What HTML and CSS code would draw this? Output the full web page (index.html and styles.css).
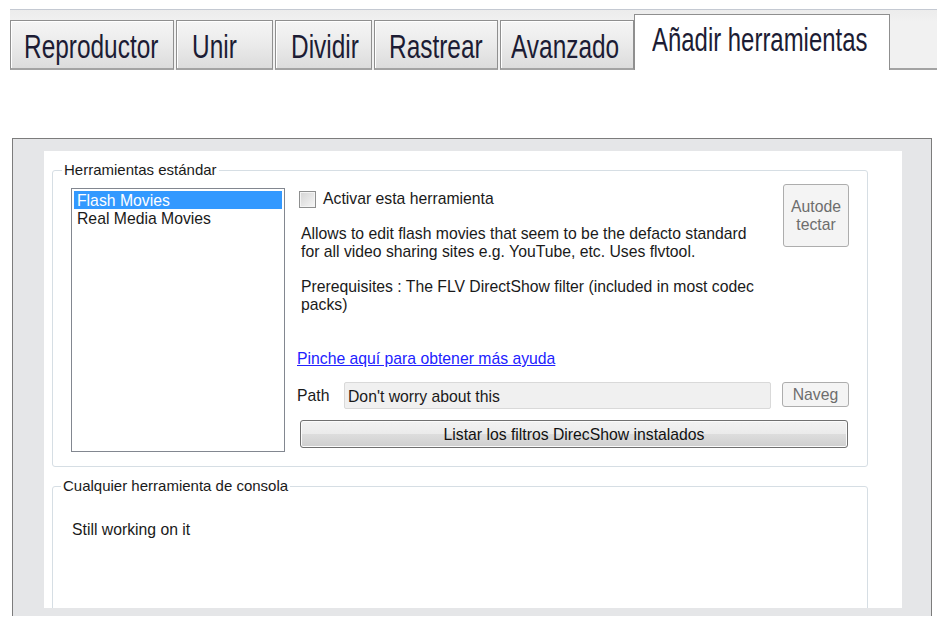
FILE: index.html
```html
<!DOCTYPE html>
<html lang="es">
<head>
<meta charset="utf-8">
<title>Añadir herramientas</title>
<link rel="stylesheet" href="styles.css">
</head>
<body>
  <nav class="tabstrip">
    <div class="tab tab-w1"><span class="tab-label">Reproductor</span></div>
    <div class="tab tab-w2"><span class="tab-label">Unir</span></div>
    <div class="tab tab-w2"><span class="tab-label">Dividir</span></div>
    <div class="tab tab-w4"><span class="tab-label">Rastrear</span></div>
    <div class="tab tab-w5"><span class="tab-label">Avanzado</span></div>
    <div class="tab tab-active"><span class="tab-label">Añadir herramientas</span></div>
    <div class="tab-filler"></div>
  </nav>

  <section class="panel">
    <div class="page">
      <fieldset class="group group-tools">
        <legend class="group-title">Herramientas estándar</legend>
        <div class="tool-row">
          <ul class="listbox">
            <li class="list-item selected">Flash Movies</li>
            <li class="list-item">Real Media Movies</li>
          </ul>

          <div class="tool-detail">
            <div class="detail-top">
              <div class="detail-text">
                <label class="check-row">
                  <span class="checkbox"></span>
                  <span>Activar esta herramienta</span>
                </label>
                <p class="desc">Allows to edit flash movies that seem to be the defacto standard for all video sharing sites e.g. YouTube, etc. Uses flvtool.</p>
                <p class="desc desc-req">Prerequisites : The FLV DirectShow filter (included in most codec packs)</p>
              </div>
              <button class="btn btn-disabled btn-auto">Autode<br>tectar</button>
            </div>

            <a class="help-link" href="#">Pinche aquí para obtener más ayuda</a>

            <div class="path-row">
              <span class="path-label">Path</span>
              <div class="textbox">Don't worry about this</div>
              <button class="btn btn-disabled btn-browse">Naveg</button>
            </div>

            <button class="btn btn-list">Listar los filtros DirecShow instalados</button>
          </div>
        </div>
      </fieldset>

      <fieldset class="group group-console">
        <legend class="group-title">Cualquier herramienta de consola</legend>
        <p class="console-text">Still working on it</p>
      </fieldset>
    </div>
  </section>
</body>
</html>
```

FILE: styles.css
```css
* {
  box-sizing: border-box;
}

html, body {
  margin: 0;
  padding: 0;
  background: #ffffff;
  overflow: hidden;
}

body {
  width: 937px;
  height: 617px;
  font-family: "Liberation Sans", Arial, sans-serif;
  font-size: 15.75px;
  line-height: 18px;
  color: #1a1a1a;
}

/* ---------- tab strip ---------- */
.tabstrip {
  display: flex;
  align-items: flex-end;
  margin: 9px 0 0 10px;
  height: 61px;
  border-top: 1px solid #c4c9d2;
  background: linear-gradient(#ececec, #f1f1f1 12px, #f1f1f1);
}

.tab {
  height: 50px;
  margin-right: 2px;
  padding: 9px 0 0 14px;
  border: 1px solid #8f8f8f;
  border-bottom: 2px solid #a3a3a3;
  background: linear-gradient(#f5f5f5, #ececec 45%, #dcdcdc);
  box-shadow: inset 1px 1px 0 #ffffff;
  overflow: hidden;
  white-space: nowrap;
}

.tab-label {
  display: inline-block;
  font-size: 33px;
  line-height: 33px;
  color: #1c1c34;
  transform: scaleX(0.74);
  transform-origin: left center;
}

.tab-w1 { width: 164px; padding-left: 13px; }
.tab-w2 { width: 97px; padding-left: 15px; }
.tab-w4 { width: 124px; }
.tab-w5 { width: 134px; margin-right: 0; padding-left: 10px; }

.tab-active {
  width: 256px;
  height: 56px;
  margin-right: 0;
  padding: 8px 0 0 17px;
  border-bottom: none;
  background: #ffffff;
  box-shadow: none;
}

.tab-active .tab-label {
  transform: scaleX(0.725);
}

.tab-filler {
  flex: 1;
  align-self: stretch;
  border-bottom: 2px solid #a3a3a3;
}

/* ---------- panel ---------- */
.panel {
  margin: 68px 5px 0 12px;
  padding: 12px 29px 8px 31px;
  border: 1px solid #7c7c7c;
  border-bottom: none;
  background: #e5e6e8;
}

.page {
  height: 457px;
  overflow: hidden;
  background: #ffffff;
  padding-top: 10px;
}

.group {
  margin: 0 34px 0 8px;
  border: 1px solid #d6dee4;
  border-radius: 3px;
  min-width: 0;
}

.group-title {
  margin-left: -9px;
  padding: 0 2px;
  line-height: 18px;
  font-size: 15px;
  color: #1a1a1a;
}

.group-tools {
  padding: 5px 18px 14px 18px;
}

.group-console {
  margin-top: 10px;
  height: 200px;
  padding: 26px 18px 0 19px;
}

.group-console .group-title {
  margin-left: -11px;
}

.console-text {
  margin: 0;
}

/* ---------- tool row ---------- */
.tool-row {
  display: flex;
  align-items: flex-start;
  gap: 12px;
}

.listbox {
  width: 215px;
  height: 264px;
  margin: 4px 0 0 0;
  padding: 2px;
  list-style: none;
  border: 1px solid #828790;
  background: #ffffff;
}

.list-item {
  height: 18px;
  padding-left: 3px;
  line-height: 20px;
  white-space: nowrap;
  overflow: hidden;
}

.list-item.selected {
  background: #3399ff;
  color: #ffffff;
}

.tool-detail {
  width: 552px;
  display: flex;
  flex-direction: column;
}

.detail-top {
  display: flex;
  justify-content: space-between;
  align-items: flex-start;
  padding-left: 2px;
}

.detail-text {
  width: 472px;
  padding-top: 6px;
}

.check-row {
  display: flex;
  align-items: center;
  gap: 7px;
  height: 18px;
  line-height: 20px;
}

.checkbox {
  width: 17px;
  height: 17px;
  border: 1px solid #8e8f8f;
  background: linear-gradient(135deg, #d4d4d4, #f6f6f6);
  box-shadow: inset 0 0 0 1px #f4f4f4;
}

.desc {
  margin: 17px 0 0 2px;
  width: 456px;
}

.desc-req {
  margin-top: 17px;
}

.help-link {
  margin-top: 36px;
  align-self: flex-start;
  color: #2222ff;
  text-decoration: underline;
}

/* ---------- buttons & inputs ---------- */
.btn {
  font: inherit;
  line-height: 18px;
  padding: 0;
  cursor: default;
}

.btn-disabled {
  color: #6d6d6d;
  background: #f4f4f4;
  border: 1px solid #adadad;
  border-radius: 3px;
}

.btn-auto {
  width: 66px;
  height: 63px;
  margin-right: 0;
}

.path-row {
  display: flex;
  align-items: flex-start;
  margin-top: 14px;
}

.path-label {
  width: 47px;
  padding-top: 5px;
}

.textbox {
  width: 427px;
  height: 27px;
  padding: 5px 0 0 3px;
  background: #f0f0f0;
  border: 1px solid #d9d9d9;
  border-radius: 2px;
  white-space: nowrap;
}

.btn-browse {
  width: 67px;
  height: 25px;
  margin-left: 11px;
  padding-top: 1px;
}

.btn-list {
  width: 548px;
  height: 28px;
  margin: 11px 0 0 3px;
  padding-top: 2px;
  color: #111111;
  border: 1px solid #707070;
  border-radius: 3px;
  background: linear-gradient(#f2f2f2, #ebebeb 50%, #dddddd 51%, #cfcfcf);
  box-shadow: inset 0 0 0 1px #fbfbfb;
}
```
